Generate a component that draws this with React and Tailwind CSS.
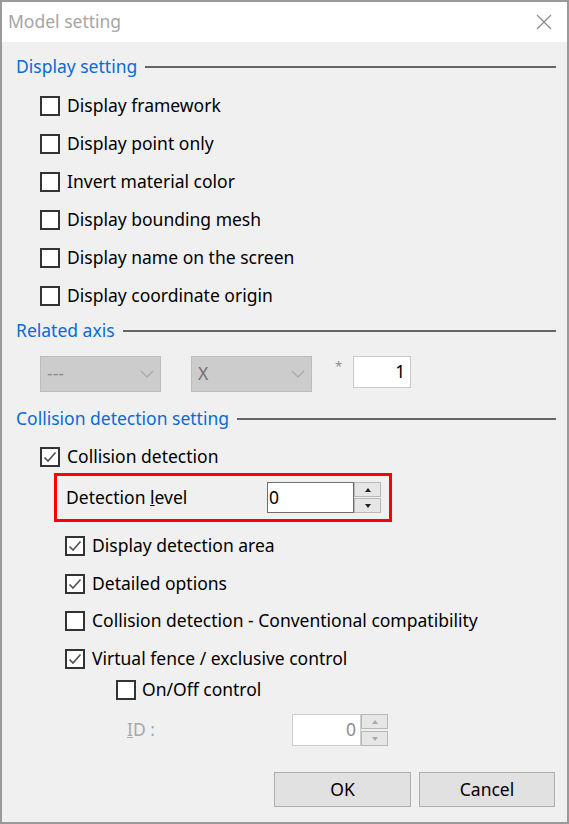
import React from 'react';

const Check = ({ checked }) => (
  <span className="w-[20px] h-[20px] border-2 border-[#333] bg-white flex items-center justify-center shrink-0">
    {checked && (
      <svg width="16" height="16" viewBox="0 0 16 16">
        <path d="M2.5 8.5 L6 12 L13.5 3.5" fill="none" stroke="#555" strokeWidth="1.7" />
      </svg>
    )}
  </span>
);

const CheckRow = ({ label, checked, h = 'h-[38px]', gap = 'gap-[7px]' }) => (
  <div className={`flex items-center ${h} ${gap}`}>
    <Check checked={checked} />
    <span className="text-black leading-none">{label}</span>
  </div>
);

const Heading = ({ children, h = 'h-[38px]', mt = '' }) => (
  <div className={`flex items-center ${h} ${mt} gap-[8px]`}>
    <span className="text-[#0a6ad6] leading-none">{children}</span>
    <span className="flex-1 h-[2px] bg-[#666666]" />
  </div>
);

const Spin = ({ disabled }) => (
  <div className="flex flex-col justify-between w-[27px] h-full">
    {[0, 1].map(i => (
      <span key={i} className="h-[15px] border border-[#b8b8b8] bg-[#e6e6e6] flex items-center justify-center">
        <svg width="6" height="4" viewBox="0 0 6 4">
          <path d={i === 0 ? 'M0 4 L3 0 L6 4 Z' : 'M0 0 L3 4 L6 0 Z'} fill={disabled ? '#aaa' : '#222'} />
        </svg>
      </span>
    ))}
  </div>
);

const Combo = ({ value, color }) => (
  <div className="w-[121px] h-[36px] bg-[#cccccc] border border-[#bdbdbd] flex items-center justify-between px-[6px]">
    <span className={`${color} leading-none`}>{value}</span>
    <svg width="14" height="8" viewBox="0 0 14 8">
      <path d="M1 1 L7 7 L13 1" fill="none" stroke="#a8a8a8" strokeWidth="1.2" />
    </svg>
  </div>
);

export default function App() {
  return (
    <div className="w-[569px] h-[824px] border-2 border-[#9a9a9a] flex flex-col bg-[#f0f0f0] font-['Noto_Sans',sans-serif] text-[17.5px]">
      <div className="h-[40px] bg-white flex items-center justify-between pl-[6px] pr-[15px]">
        <span className="text-[#a5a5a5] text-[17.5px] leading-none">Model setting</span>
        <svg width="16" height="16" viewBox="0 0 16 16">
          <path d="M1 1 L15 15 M15 1 L1 15" stroke="#8a8a8a" strokeWidth="1.2" />
        </svg>
      </div>

      <div className="flex flex-col pl-[14px] pr-[11px] pt-[6px]">
        <Heading>Display setting</Heading>
        <div className="pl-[24px] flex flex-col mt-[1px]">
          <CheckRow label="Display framework" />
          <CheckRow label="Display point only" />
          <CheckRow label="Invert material color" />
          <CheckRow label="Display bounding mesh" />
          <CheckRow label="Display name on the screen" />
          <CheckRow label="Display coordinate origin" />
        </div>

        <Heading h="h-[31px]">Related axis</Heading>
        <div className="flex items-start mt-[10px] h-[36px] pl-[24px]">
          <Combo value="---" color="text-[#8c8c8c]" />
          <div className="ml-[30px]"><Combo value="X" color="text-[#707070]" /></div>
          <span className="ml-[23px] mt-[4px] text-[#8c8c8c] text-[13px] leading-none">*</span>
          <div className="ml-[11px] w-[58px] h-[32px] bg-white border border-[#c8c8c8] flex items-center justify-end pr-[5px]">
            <span className="text-black leading-none">1</span>
          </div>
        </div>

        <Heading mt="mt-[8px]">Collision detection setting</Heading>
        <div className="pl-[24px] flex flex-col">
          <div className="pt-[3px]">
            <CheckRow label="Collision detection" checked h="h-[32px]" />
          </div>
          <div className="ml-[14px] w-[338px] h-[49px] border-[3px] border-[#ff0000] flex items-center justify-between pl-[9px] pr-[8px]">
            <span className="text-black leading-none">Detection <span className="underline">l</span>evel</span>
            <div className="flex h-[31px]">
              <div className="w-[87px] h-full bg-white border border-[#6e6e6e] flex items-center pl-[1px]">
                <span className="text-black leading-none">0</span>
              </div>
              <Spin />
            </div>
          </div>
          <div className="pl-[25px] flex flex-col mt-[5px]">
            <CheckRow label="Display detection area" checked />
            <CheckRow label="Detailed options" checked h="h-[37px]" />
            <CheckRow label="Collision detection - Conventional compatibility" />
            <CheckRow label="Virtual fence / exclusive control" checked />
            <div className="pl-[51px]">
              <CheckRow label="On/Off control" h="h-[24px]" gap="gap-[6px]" />
            </div>
            <div className="flex items-center h-[32px] mt-[12px] pl-[62px]">
              <span className="text-[#a8a8a8] leading-none w-[165px]"><span className="underline">I</span>D :</span>
              <div className="flex h-full">
                <div className="w-[69px] h-full bg-white border border-[#cccccc] flex items-center justify-end pr-[4px]">
                  <span className="text-[#8c8c8c] leading-none">0</span>
                </div>
                <Spin disabled />
              </div>
            </div>
          </div>
        </div>

        <div className="flex justify-end gap-[8px] mt-[26px] pr-[1px]">
          <button className="w-[137px] h-[35px] bg-[#e1e1e1] border border-[#adadad] text-black">OK</button>
          <button className="w-[136px] h-[35px] bg-[#e1e1e1] border border-[#adadad] text-black">Cancel</button>
        </div>
      </div>
    </div>
  );
}
